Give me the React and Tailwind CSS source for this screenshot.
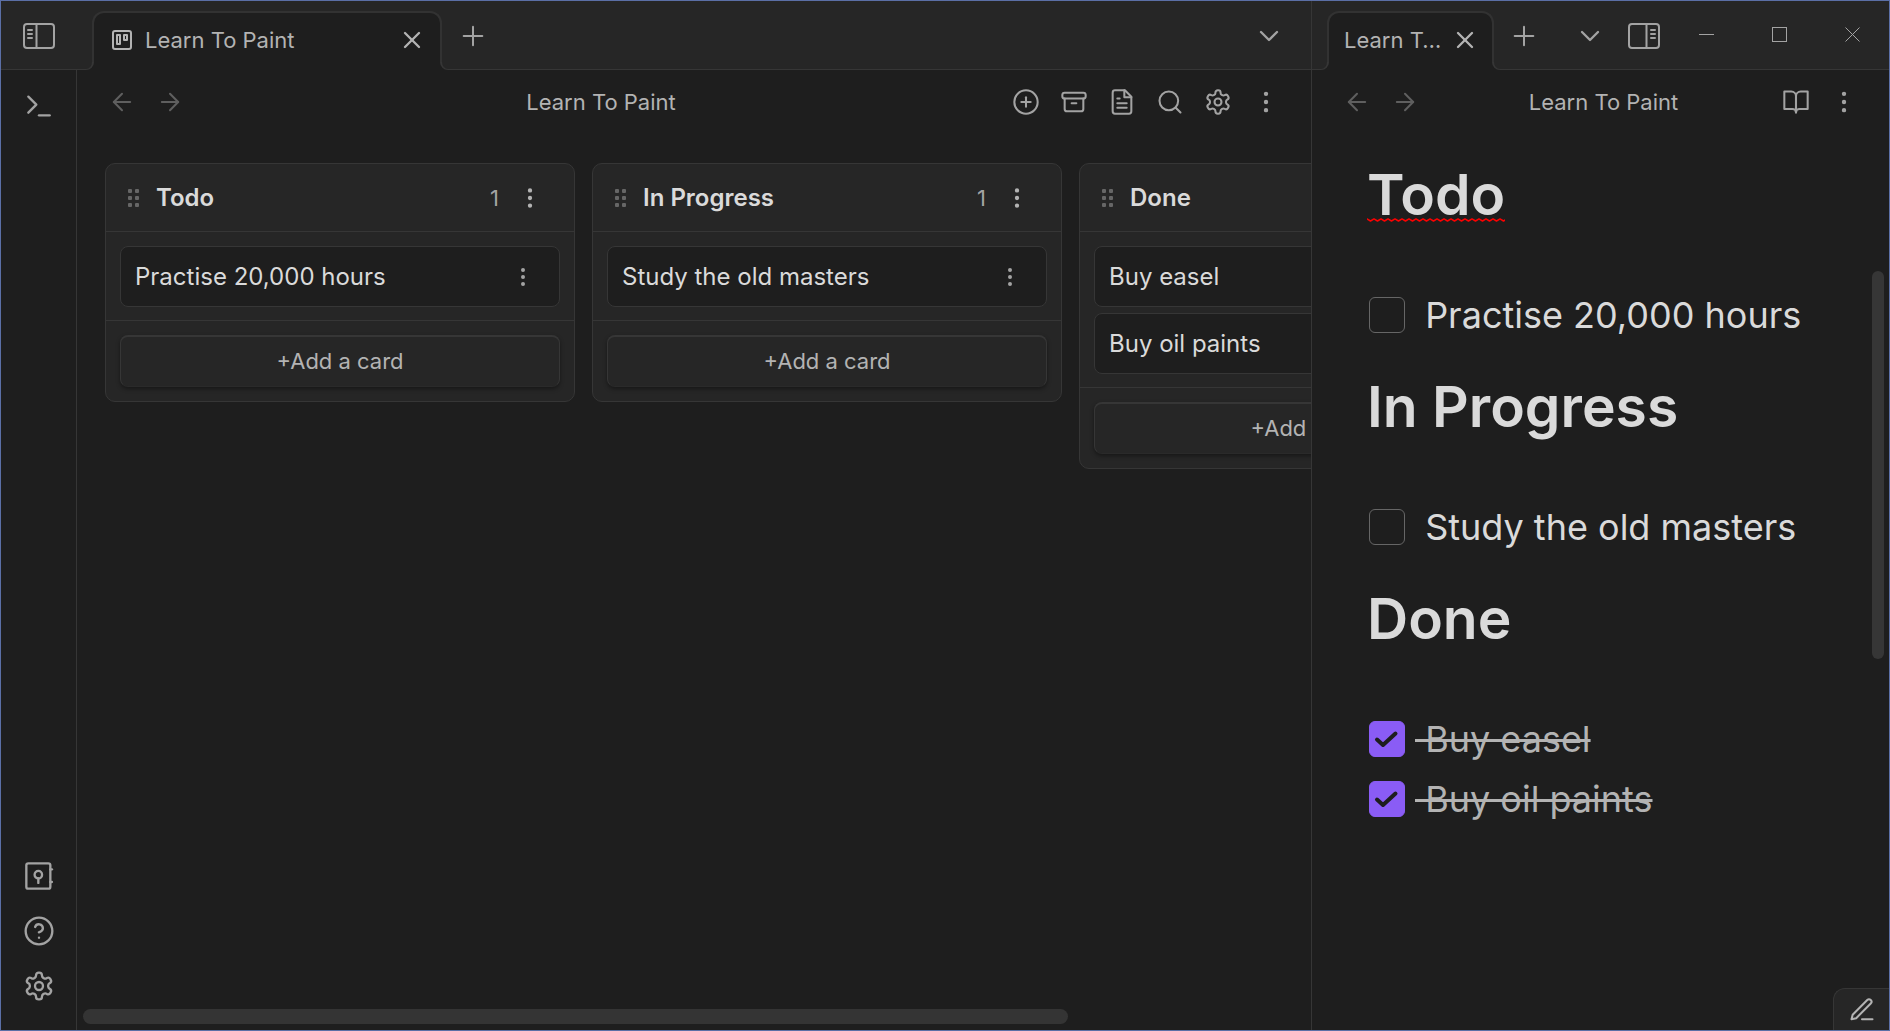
import React from "react";

const ICONS = {
  arrowLeft: ["M12 19l-7-7 7-7", "M19 12H5"],
  arrowRight: ["M5 12h14", "M12 5l7 7-7 7"],
  x: ["M18 6 6 18", "M6 6l12 12"],
  plus: ["M5 12h14", "M12 5v14"],
  chevronDown: ["M6 9l6 6 6-6"],
  terminal: ["M4 17l6-6-6-6", "M12 19h8"],
  kanban: [
    "M5 3h14a2 2 0 0 1 2 2v14a2 2 0 0 1-2 2H5a2 2 0 0 1-2-2V5a2 2 0 0 1 2-2z",
    "M7 7h3v9H7z",
    "M14 7h3v5h-3z",
  ],
  plusCircle: ["M12 2a10 10 0 1 0 0 20 10 10 0 1 0 0-20z", "M8 12h8", "M12 8v8"],
  archive: [
    "M4 4h16a2 2 0 0 1 2 2v1a2 2 0 0 1-2 2H4a2 2 0 0 1-2-2V6a2 2 0 0 1 2-2z",
    "M4 9v9a2 2 0 0 0 2 2h12a2 2 0 0 0 2-2V9",
    "M10 13h4",
  ],
  file: [
    "M14.5 2H6a2 2 0 0 0-2 2v16a2 2 0 0 0 2 2h12a2 2 0 0 0 2-2V7.5L14.5 2z",
    "M14 2v6h6",
    "M16 13H8",
    "M16 17H8",
    "M10 9H8",
  ],
  search: ["M11 3a8 8 0 1 0 0 16 8 8 0 1 0 0-16z", "M21 21l-4.3-4.3"],
  settings: [
    "M12.22 2h-.44a2 2 0 0 0-2 2v.18a2 2 0 0 1-1 1.73l-.43.25a2 2 0 0 1-2 0l-.15-.08a2 2 0 0 0-2.73.73l-.22.38a2 2 0 0 0 .73 2.73l.15.1a2 2 0 0 1 1 1.72v.51a2 2 0 0 1-1 1.74l-.15.09a2 2 0 0 0-.73 2.73l.22.38a2 2 0 0 0 2.73.73l.15-.08a2 2 0 0 1 2 0l.43.25a2 2 0 0 1 1 1.73V20a2 2 0 0 0 2 2h.44a2 2 0 0 0 2-2v-.18a2 2 0 0 1 1-1.73l.43-.25a2 2 0 0 1 2 0l.15.08a2 2 0 0 0 2.73-.73l.22-.39a2 2 0 0 0-.73-2.73l-.15-.08a2 2 0 0 1-1-1.74v-.5a2 2 0 0 1 1-1.74l.15-.09a2 2 0 0 0 .73-2.73l-.22-.38a2 2 0 0 0-2.73-.73l-.15.08a2 2 0 0 1-2 0l-.43-.25a2 2 0 0 1-1-1.73V4a2 2 0 0 0-2-2z",
    "M12 9a3 3 0 1 0 0 6 3 3 0 1 0 0-6z",
  ],
  dots: [
    "M12 4a1 1 0 1 0 0 2 1 1 0 1 0 0-2z",
    "M12 11a1 1 0 1 0 0 2 1 1 0 1 0 0-2z",
    "M12 18a1 1 0 1 0 0 2 1 1 0 1 0 0-2z",
  ],
  book: ["M2 3h6a4 4 0 0 1 4 4v14a3 3 0 0 0-3-3H2z", "M22 3h-6a4 4 0 0 0-4 4v14a3 3 0 0 1 3-3h7z"],
  vault: [
    "M4 2.5h15a1.5 1.5 0 0 1 1.5 1.5v16a1.5 1.5 0 0 1-1.5 1.5H4A1.5 1.5 0 0 1 2.500 20V4A1.500 1.500 0 0 1 4 2.500z",
    "M11.500 8.200a2.800 2.800 0 1 0 0 5.600 2.800 2.800 0 1 0 0-5.600z",
    "M11.500 13.800v3.400",
    "M20.500 7h1.200",
    "M20.500 16.500h1.200",
  ],
  help: ["M12 2a10 10 0 1 0 0 20 10 10 0 1 0 0-20z", "M9.090 9a3 3 0 0 1 5.830 1c0 2-3 3-3 3", "M12 17h.01"],
  pen: ["M12 20h9", "M16.5 3.500a2.120 2.120 0 0 1 3 3L7 19l-4 1 1-4z"],
};

function Icon({ name, size = 28, stroke = 1.75, className = "" }) {
  return (
    <svg
      width={size}
      height={size}
      viewBox="0 0 24 24"
      fill="none"
      stroke="currentColor"
      strokeWidth={stroke}
      strokeLinecap="round"
      strokeLinejoin="round"
      className={`shrink-0 ${className}`}
      aria-hidden="true"
    >
      {ICONS[name].map((d) => (
        <path key={d} d={d} />
      ))}
    </svg>
  );
}

function SidebarIcon({ flip }) {
  return (
    <svg width="32" height="26" viewBox="0 0 32 26" fill="none" stroke="currentColor" strokeWidth="2" strokeLinecap="round" aria-hidden="true">
      <rect x="1" y="1" width="30" height="24" rx="3" />
      {flip ? <path d="M18.500 1v24M23 7h4M23 11h4M23 15h4" /> : <path d="M13.500 1v24M5 7h4M5 11h4M5 15h4" />}
    </svg>
  );
}

function IconButton({ label, className = "", children }) {
  return (
    <button type="button" aria-label={label} className={`flex shrink-0 items-center justify-center ${className}`}>
      {children}
    </button>
  );
}

function Tab({ title, icon, className }) {
  return (
    <div className={`relative -mb-px flex h-[59px] items-center self-end rounded-t-xl border-x-2 border-t-2 border-[#323232] bg-[#1e1e1e] pb-1 text-[#b3b3b3] ${className}`}>
      <span className="absolute bottom-0 -left-2 size-2 overflow-hidden bg-[#1e1e1e]">
        <span className="block size-full rounded-br-lg border-r-2 border-b border-[#363636] bg-[#262626]" />
      </span>
      <span className="absolute -right-2 bottom-0 size-2 overflow-hidden bg-[#1e1e1e]">
        <span className="block size-full rounded-bl-lg border-b border-l-2 border-[#363636] bg-[#262626]" />
      </span>
      {icon && <Icon name={icon} size={24} stroke={2} className="mr-[11px]" />}
      <span className="min-w-0 flex-1 truncate text-[22px] leading-8">{title}</span>
      <IconButton label={`Close ${title}`} className="ml-2">
        <Icon name="x" stroke={2} />
      </IconButton>
    </div>
  );
}

function ViewHeader({ actions }) {
  return (
    <header className="flex h-16 shrink-0 items-center px-[21px] text-[#a3a3a3]">
      <IconButton label="Back" className="h-12 w-12 text-[#5f5f5f]">
        <Icon name="arrowLeft" />
      </IconButton>
      <IconButton label="Forward" className="h-12 w-12 text-[#5f5f5f]">
        <Icon name="arrowRight" />
      </IconButton>
      <h1 className="min-w-0 flex-1 truncate pl-[6px] text-center text-[22px] leading-8 text-[#b3b3b3]">Learn To Paint</h1>
      {actions.map(([name, label]) => (
        <IconButton key={name} label={label} className="h-12 w-12">
          <Icon name={name} />
        </IconButton>
      ))}
    </header>
  );
}

function Grip() {
  return (
    <svg width="12" height="18" viewBox="0 0 12 18" className="shrink-0 fill-[#666666]" aria-hidden="true">
      {[0, 7, 14].map((y) =>
        [1, 8].map((x) => <rect key={`${x}-${y}`} x={x} y={y} width="4" height="4" rx="1" />)
      )}
    </svg>
  );
}

function Lane({ title, cards }) {
  return (
    <section className="w-[470px] shrink-0 rounded-[10px] border border-[#363636] bg-[#262626]">
      <header className="flex h-[68px] items-center border-b border-[#363636] pr-[31px] pl-[21px]">
        <Grip />
        <h2 className="ml-[17px] flex-1 text-[24px] leading-8 font-semibold text-[#dadada]">{title}</h2>
        <span className="mr-[18px] text-[22px] leading-8 text-[#a3a3a3]">{cards.length}</span>
        <IconButton label={`${title} options`} className="text-[#b3b3b3]">
          <Icon name="dots" size={26} stroke={2} />
        </IconButton>
      </header>
      <ul className="flex flex-col gap-[6px] px-[14px] pt-[14px] pb-[13px]">
        {cards.map((card) => (
          <li key={card} className="flex h-[61px] items-center rounded-lg border border-[#363636] bg-[#1e1e1e] pr-6 pl-[14px]">
            <span className="flex-1 text-[24px] leading-8 text-[#dadada]">{card}</span>
            <IconButton label={`${card} options`} className="text-[#a3a3a3]">
              <Icon name="dots" size={24} stroke={2} />
            </IconButton>
          </li>
        ))}
      </ul>
      <div className="border-t border-[#363636] p-[14px]">
        <button
          type="button"
          className="block h-[52px] w-full rounded-lg border border-t-2 border-[#363636] border-b-[#2a2a2a] bg-[#262626] pb-[2px] text-[22px] leading-8 text-[#b3b3b3] shadow-[0_2px_4px_rgba(0,0,0,0.4)]"
        >
          +Add a card
        </button>
      </div>
    </section>
  );
}

function Squiggle() {
  return (
    <svg className="absolute bottom-2 left-0 h-1 w-full" aria-hidden="true">
      <defs>
        <pattern id="wave" width="7" height="4" patternUnits="userSpaceOnUse">
          <path d="M-3.500 3L0 1L3.500 3L7 1L10.500 3" fill="none" stroke="#ff0000" strokeWidth="1.500" strokeLinejoin="round" />
        </pattern>
      </defs>
      <rect width="100%" height="4" fill="url(#wave)" />
    </svg>
  );
}

function Heading({ children, misspelled }) {
  return (
    <h2 className="mt-5 pt-[7px] pb-[55px] text-[57px] leading-[70px] font-semibold text-[#dadada] first:mt-0">
      <span className="relative inline-block">
        {children}
        {misspelled && <Squiggle />}
      </span>
    </h2>
  );
}

function Task({ children, done }) {
  return (
    <label className="flex h-[60px] items-center">
      <span className="relative ml-[2px] size-9 shrink-0">
        <input
          type="checkbox"
          defaultChecked={done}
          className="peer block size-9 appearance-none rounded-[6px] border border-[#666666] checked:border-[#8a5cf5] checked:bg-[#8a5cf5]"
        />
        <svg
          viewBox="0 0 36 36"
          className="pointer-events-none absolute inset-0 hidden size-9 fill-none stroke-[#1e1e1e] stroke-4 peer-checked:block"
          strokeLinecap="round"
          strokeLinejoin="round"
          aria-hidden="true"
        >
          <path d="M8 18.500l6 5.500L26.500 12.500" />
        </svg>
      </span>
      <span
        className={
          done
            ? "ml-[10px] text-[36px] leading-[60px] whitespace-pre text-[#b3b3b3] line-through"
            : "ml-[10px] text-[36px] leading-[60px] whitespace-pre text-[#dadada]"
        }
      >
        {" " + children}
      </span>
    </label>
  );
}

export default function App() {
  return (
    <div className="flex h-screen w-full overflow-hidden border border-[#5b6fa6] bg-[#1e1e1e] font-['Inter',sans-serif] text-[#a3a3a3]">
      <nav className="flex w-[76px] shrink-0 flex-col">
        <div className="flex h-[69px] shrink-0 items-center justify-center border-b border-[#363636] bg-[#262626] pt-[2px]">
          <IconButton label="Toggle left sidebar">
            <SidebarIcon />
          </IconButton>
        </div>
        <div className="flex flex-1 flex-col items-center border-r border-[#363636] pt-5 pb-7">
          <IconButton label="Open command palette">
            <Icon name="terminal" size={32} />
          </IconButton>
          <div className="mt-auto flex flex-col gap-[23px]">
            <IconButton label="Open another vault">
              <Icon name="vault" size={32} />
            </IconButton>
            <IconButton label="Help">
              <Icon name="help" size={32} />
            </IconButton>
            <IconButton label="Settings">
              <Icon name="settings" size={32} />
            </IconButton>
          </div>
        </div>
      </nav>

      <main className="flex min-w-0 flex-1 flex-col">
        <div className="flex h-[69px] shrink-0 border-b border-[#363636] bg-[#262626] pl-[15px]">
          <Tab title="Learn To Paint" icon="kanban" className="w-[350px] pr-[14px] pl-4" />
          <IconButton label="New tab" className="w-[62px] pt-[2px]">
            <Icon name="plus" size={32} stroke={1.5} />
          </IconButton>
          <IconButton label="Tab list" className="mr-4 ml-auto w-[52px] pt-[2px]">
            <Icon name="chevronDown" size={32} />
          </IconButton>
        </div>
        <ViewHeader
          actions={[
            ["plusCircle", "Add a list"],
            ["archive", "Archive completed cards"],
            ["file", "Open as markdown"],
            ["search", "Search"],
            ["settings", "Board settings"],
            ["dots", "More options"],
          ]}
        />
        <div className="flex flex-1 items-start gap-[17px] overflow-hidden pt-[29px] pl-7">
          <Lane title="Todo" cards={["Practise 20,000 hours"]} />
          <Lane title="In Progress" cards={["Study the old masters"]} />
          <Lane title="Done" cards={["Buy easel", "Buy oil paints"]} />
        </div>
        <div className="pr-3 pb-[6px] pl-[6px]">
          <div className="h-[15px] w-[81%] rounded-full bg-[#343434]" />
        </div>
      </main>

      <aside className="relative flex w-[578px] shrink-0 flex-col border-l border-[#363636]">
        <div className="flex h-[69px] shrink-0 border-b border-[#363636] bg-[#262626] pl-[15px]">
          <Tab title="Learn To Paint" className="w-[167px] pr-[13px] pl-[15px]" />
          <IconButton label="New tab" className="w-[60px] pt-[2px]">
            <Icon name="plus" size={32} stroke={1.5} />
          </IconButton>
          <IconButton label="Tab list" className="ml-auto w-14 pt-[2px]">
            <Icon name="chevronDown" size={32} />
          </IconButton>
          <IconButton label="Toggle right sidebar" className="w-[52px] pt-[2px]">
            <SidebarIcon flip />
          </IconButton>
          <IconButton label="Minimise" className="w-[73px] pb-[2px]">
            <svg width="15" height="15" fill="none" stroke="currentColor" aria-hidden="true">
              <path d="M0 7.500h15" />
            </svg>
          </IconButton>
          <IconButton label="Maximise" className="w-[73px] pb-[2px]">
            <svg width="15" height="15" fill="none" stroke="currentColor" aria-hidden="true">
              <rect x="0.500" y="0.500" width="14" height="14" />
            </svg>
          </IconButton>
          <IconButton label="Close window" className="w-[73px] pb-[2px]">
            <svg width="15" height="15" fill="none" stroke="currentColor" aria-hidden="true">
              <path d="M0.500 0.500l14 14M14.500 0.500l-14 14" />
            </svg>
          </IconButton>
        </div>
        <ViewHeader
          actions={[
            ["book", "Reading view"],
            ["dots", "More options"],
          ]}
        />
        <div className="flex min-h-0 flex-1 overflow-hidden pr-[5px]">
          <article className="min-w-0 flex-1 pt-[19px] pl-[55px]">
            <Heading misspelled>Todo</Heading>
            <Task>Practise 20,000 hours</Task>
            <Heading>In Progress</Heading>
            <Task>Study the old masters</Task>
            <Heading>Done</Heading>
            <Task done>Buy easel</Task>
            <Task done>Buy oil paints</Task>
          </article>
          <div className="mt-[137px] h-[388px] w-3 rounded-full bg-[#363636]" />
        </div>
        <button
          type="button"
          aria-label="Toggle editing mode"
          className="absolute right-0 bottom-0 flex h-[42px] w-14 items-center justify-center rounded-tl-xl border-t border-l border-[#363636] bg-[#262626] text-[#b3b3b3]"
        >
          <Icon name="pen" />
        </button>
      </aside>
    </div>
  );
}
